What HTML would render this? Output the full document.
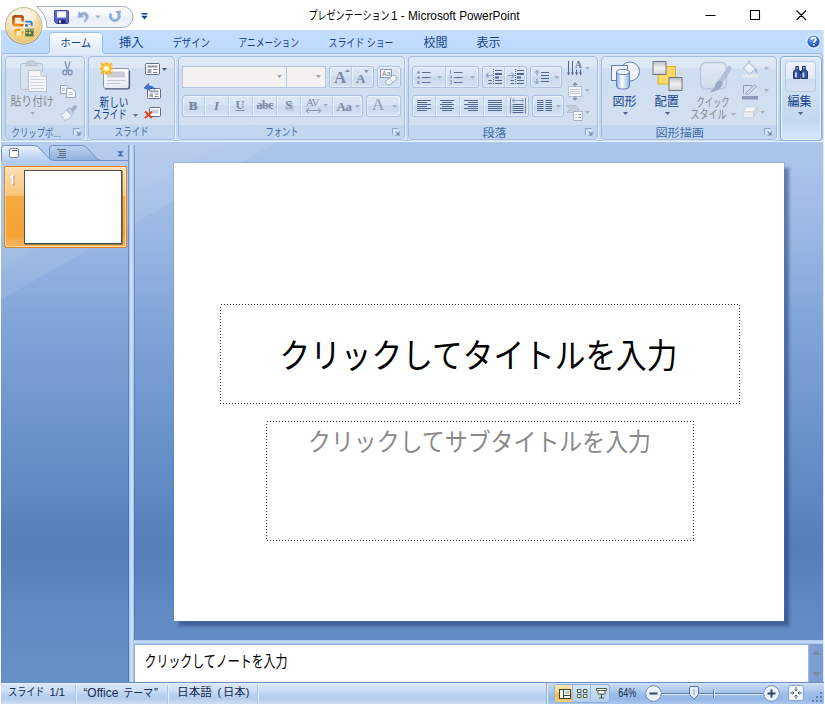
<!DOCTYPE html>
<html lang="ja"><head><meta charset="utf-8"><title>プレゼンテーション1 - Microsoft PowerPoint</title><style>
html,body{margin:0;padding:0}
body{width:825px;height:705px;position:relative;overflow:hidden;background:#fff;font-family:"Liberation Sans",sans-serif;font-size:12px}
.a{position:absolute;display:block;box-sizing:border-box}
svg{overflow:visible}
.t svg{position:absolute;left:0;top:0}
.t text{font-family:"Liberation Sans","Noto Sans CJK JP",sans-serif;white-space:pre}
.grp{border:1px solid #a3bde0;border-radius:4px;background:linear-gradient(#dfe9f6 0,#dce7f5 11px,#cfdef0 12px,#d2e0f1 100%);box-shadow:1px 0 0 rgba(255,255,255,.7),0 1px 0 rgba(255,255,255,.5)}
.grp i{position:absolute;left:0;right:0;bottom:0;height:14px;background:#c2d7ef;border-radius:0 0 3px 3px}
.bg{border:1px solid #a9c1e2;border-radius:3px;background:linear-gradient(#dde8f6 0,#d6e3f3 45%,#c9daee 50%,#d3e1f2 100%);box-shadow:inset 0 0 0 1px rgba(255,255,255,.45)}
.sep{width:1px;background:#bccfe8;box-shadow:1px 0 0 rgba(255,255,255,.45)}
</style></head><body>
<div class="a" style="left:0px;top:0px;width:825px;height:30px;background:#fff"></div>
<div class="a t" style="left:306px;top:7px;width:216px;height:16px"><svg width="216" height="16" role="img" aria-label="プレゼンテーション1 - Microsoft PowerPoint"><text x="2.5" y="13" font-size="12" fill="#000" textLength="81" lengthAdjust="spacingAndGlyphs">プレゼンテーション</text><text x="85" y="13.4" font-size="12.5" fill="#000" textLength="128.5" lengthAdjust="spacingAndGlyphs">1 - Microsoft PowerPoint</text></svg></div>
<svg class="a" style="left:700px;top:5px" width="110" height="20" viewBox="0 0 110 20"><path d="M5.5 10.5H15.5M50.5 5.5H59.5V14.5H50.5ZM96.5 5.5L106 15M106 5.5L96.5 15" fill="none" stroke="#000" stroke-width="1.1"/></svg>
<div class="a" style="left:0px;top:30px;width:825px;height:24px;background:linear-gradient(#c6ddfb,#bfdbff 60%,#bcd8fb)"></div>
<div class="a" style="left:0px;top:53px;width:825px;height:90px;background:linear-gradient(#dbe7f6 0,#d2e1f3 4px,#c5d9f1 30px,#c1d6ef 80px,#c9ddf5 86px,#dbe9fb 88px,#c7dcf6 90px)"></div>
<div class="a" style="left:1px;top:53px;width:822px;height:88px;border:1px solid #9cbce6;border-radius:4px;border-bottom-color:#a9c4e8"></div>
<svg class="a" style="left:46px;top:31px" width="62" height="24" viewBox="0 0 62 24"><defs><linearGradient id="tg" x1="0" y1="0" x2="0" y2="1"><stop offset="0" stop-color="#fdfeff"/><stop offset=".5" stop-color="#eaf2fc"/><stop offset="1" stop-color="#dbe7f6"/></linearGradient></defs><path d="M0.5 22.5Q3.5 22.5 3.5 19.5V4.5Q3.5 1.5 6.5 1.5H53.5Q56.5 1.5 56.5 4.5V19.5Q56.5 22.5 59.5 22.5V24H0.5Z" fill="url(#tg)"/><path d="M0.5 22.5Q3.5 22.5 3.5 19.5V4.5Q3.5 1.5 6.5 1.5H53.5Q56.5 1.5 56.5 4.5V19.5Q56.5 22.5 59.5 22.5" fill="none" stroke="#9dbde8"/></svg>
<div class="a t" style="left:59px;top:35px;width:34px;height:15px"><svg width="34" height="15" role="img" aria-label="ホーム"><text x="1.5" y="11.8" font-size="11" fill="#15428b" textLength="30.5" lengthAdjust="spacingAndGlyphs">ホーム</text></svg></div>
<div class="a t" style="left:117px;top:35px;width:28px;height:16px"><svg width="28" height="16" role="img" aria-label="挿入"><text x="2" y="12.4" font-size="12" fill="#15428b" textLength="24.5" lengthAdjust="spacingAndGlyphs">挿入</text></svg></div>
<div class="a t" style="left:171px;top:35px;width:41px;height:16px"><svg width="41" height="16" role="img" aria-label="デザイン"><text x="1.5" y="12.1" font-size="11.5" fill="#15428b" textLength="37.5" lengthAdjust="spacingAndGlyphs">デザイン</text></svg></div>
<div class="a t" style="left:237px;top:35px;width:64px;height:16px"><svg width="64" height="16" role="img" aria-label="アニメーション"><text x="1.5" y="12.1" font-size="11.5" fill="#15428b" textLength="60.5" lengthAdjust="spacingAndGlyphs">アニメーション</text></svg></div>
<div class="a t" style="left:327px;top:35px;width:68px;height:16px"><svg width="68" height="16" role="img" aria-label="スライド ショー"><text x="1.5" y="12.1" font-size="11.5" fill="#15428b" textLength="65" lengthAdjust="spacingAndGlyphs">スライド ショー</text></svg></div>
<div class="a t" style="left:422px;top:35px;width:27px;height:16px"><svg width="27" height="16" role="img" aria-label="校閲"><text x="1.5" y="12.4" font-size="12" fill="#15428b" textLength="24" lengthAdjust="spacingAndGlyphs">校閲</text></svg></div>
<div class="a t" style="left:475px;top:35px;width:27px;height:16px"><svg width="27" height="16" role="img" aria-label="表示"><text x="1.5" y="12.4" font-size="12" fill="#15428b" textLength="24" lengthAdjust="spacingAndGlyphs">表示</text></svg></div>
<svg class="a" style="left:805.5px;top:33.5px" width="15" height="15" viewBox="0 0 15 15"><defs><radialGradient id="hg" cx=".4" cy=".3" r=".8"><stop offset="0" stop-color="#7fb0ee"/><stop offset=".6" stop-color="#2a62c4"/><stop offset="1" stop-color="#1a3f9c"/></radialGradient></defs><circle cx="7.5" cy="7.5" r="6.7" fill="url(#hg)" stroke="#e9f1fc" stroke-width="1.2"/><path d="M5.3 5.7Q5.4 3.6 7.6 3.6Q9.8 3.7 9.8 5.6Q9.8 6.8 8.6 7.5Q7.8 8 7.8 9" fill="none" stroke="#fff" stroke-width="1.6"/><rect x="7" y="10" width="1.6" height="1.6" fill="#fff"/></svg>
<svg class="a" style="left:30px;top:4px" width="108" height="26" viewBox="0 0 108 26"><defs><linearGradient id="qg" x1="0" y1="0" x2="0" y2="1"><stop offset="0" stop-color="#fdfdfe"/><stop offset=".45" stop-color="#f3f6fb"/><stop offset=".5" stop-color="#e9eff7"/><stop offset="1" stop-color="#f0f4fa"/></linearGradient></defs><path d="M6.500 2.500H92.500A10.500 10.500 0 0 1 92.500 23.500H17Q17 10.500 6.500 2.500Z" fill="url(#qg)" stroke="#a6afbf"/></svg>
<svg class="a" style="left:54px;top:10px" width="15" height="14" viewBox="0 0 15 14"><path d="M1 .5H13.5Q14.5 .5 14.5 1.5V12.5Q14.5 13.5 13.5 13.5H2.5L.5 11.5V1Q.5 .5 1 .5Z" fill="#5f65cc" stroke="#4348ac"/><rect x="3" y="1" width="9" height="6.5" fill="#fff"/><rect x="3" y="1" width="9" height="1.2" fill="#c5c9ee"/><rect x="4" y="9.5" width="7.5" height="4" fill="#23265f"/><rect x="5" y="10.3" width="2" height="2.6" fill="#e8e8f4"/></svg>
<svg class="a" style="left:77px;top:11px" width="13" height="12" viewBox="0 0 13 12"><path d="M2 .6L.8 6.600L6.600 6L4.800 4.500Q7 3.200 8.400 5Q9.600 7.200 6.800 10.200L8 11Q12.600 7 10.800 3.300Q8.300 0 3.600 2.300Z" fill="#95add4" stroke="#8aa2cb" stroke-width=".4"/></svg>
<svg class="a" style="left:95px;top:15px" width="6" height="4" viewBox="0 0 6 4"><path d="M.3 .5H5.7L3 3.5Z" fill="#a3afc2"/></svg>
<svg class="a" style="left:108px;top:10px" width="14" height="14" viewBox="0 0 14 14"><path d="M3.300 3.600A4.300 4.300 0 1 0 10.600 4.200" fill="none" stroke="#93abd4" stroke-width="2.700"/><path d="M7.300 1.200L13 .6L12 6.600Z" fill="#93abd4"/></svg>
<svg class="a" style="left:141px;top:12px" width="7" height="8" viewBox="0 0 7 8"><path d="M.5 1H6.500V2.500H.5ZM.3 3.800H6.700L3.500 7.600Z" fill="#1b3f86"/></svg>
<svg class="a" style="left:3px;top:4px" width="44" height="44" viewBox="0 0 44 44"><defs><radialGradient id="ob" cx=".42" cy=".25" r=".85"><stop offset="0" stop-color="#fffdf4"/><stop offset=".4" stop-color="#f4e9cb"/><stop offset=".72" stop-color="#ecd089"/><stop offset="1" stop-color="#e9b84e"/></radialGradient><linearGradient id="or" x1="0" y1="0" x2="0" y2="1"><stop offset="0" stop-color="#c4b88f"/><stop offset="1" stop-color="#a08c55"/></linearGradient><linearGradient id="l1" x1="0" y1="0" x2="0" y2="1"><stop offset="0" stop-color="#b04a12"/><stop offset="1" stop-color="#f58f25"/></linearGradient><linearGradient id="l3" x1="0" y1="0" x2="0" y2="1"><stop offset="0" stop-color="#f3a21a"/><stop offset="1" stop-color="#fbd568"/></linearGradient></defs><circle cx="20.700" cy="21.700" r="18.700" fill="url(#or)"/><circle cx="20.700" cy="21.700" r="17.500" fill="url(#ob)" stroke="#f3ecd6" stroke-width=".8"/><ellipse cx="20.700" cy="12.500" rx="12.500" ry="7" fill="#fff" opacity=".3"/><rect x="10.400" y="12.300" width="9.300" height="8.800" rx="1.600" fill="#f8eed6" stroke="url(#l1)" stroke-width="2.800"/><path d="M17.300 17.500H21.500V20H17.300Z" fill="#f4e6c4"/><circle cx="18.700" cy="21.300" r="1.300" fill="#e5601c"/><path d="M22.300 17.600H27Q28.700 17.600 28.700 19.300V21.800" fill="none" stroke="#2c78d6" stroke-width="1.900"/><circle cx="23.500" cy="21.400" r="1.400" fill="#2c6fd0"/><circle cx="26.300" cy="20.300" r=".8" fill="#5a9ae6"/><rect x="12.400" y="25.900" width="7" height="6.800" rx="1.200" fill="#fbf0c8" stroke="url(#l3)" stroke-width="2.300"/><path d="M17.500 24.500H21V27H17.500Z" fill="#f3e2b0"/><path d="M22.200 24.600H30.600V32.400H22.200Z" fill="#55753f"/><path d="M23 25.300H24.500V26.800H23ZM25.800 25.300H27.300V26.800H25.800ZM23 28H24.500V29.500H23ZM28.300 25.300H29.800V26.600H28.300Z" fill="#e6dc82"/><circle cx="26.800" cy="29" r="1.300" fill="#d9d070"/></svg>
<div class="a grp" style="left:5px;top:56px;width:80px;height:84px;"><i></i></div>
<div class="a grp" style="left:88px;top:56px;width:87px;height:84px;"><i></i></div>
<div class="a grp" style="left:178px;top:56px;width:227px;height:84px;"><i></i></div>
<div class="a grp" style="left:408px;top:56px;width:190px;height:84px;"><i></i></div>
<div class="a grp" style="left:601px;top:56px;width:176px;height:84px;"><i></i></div>
<svg class="a" style="left:19px;top:60px" width="29" height="32" viewBox="0 0 29 32"><rect x="1.5" y="3.5" width="22" height="26" rx="2" fill="#d9e2ee" stroke="#b3bfd0"/><path d="M8 3.5Q8 1 12.5 .8Q17 1 17 3.5L18.5 5.5H6.5Z" fill="#c9d2df" stroke="#a9b5c7" stroke-width=".8"/><path d="M9.5 10.5H22L27.5 16V31.5H9.5Z" fill="#f4f6f9" stroke="#b6c1d1"/><path d="M22 10.5V16H27.5" fill="#e3e8ef" stroke="#b6c1d1"/><path d="M12 16.5H20M12 19.500H25M12 22.5H25M12 25.5H25M12 28.5H25" stroke="#ccd4df"/></svg>
<div class="a t" style="left:9px;top:94px;width:47px;height:16px"><svg width="47" height="16" role="img" aria-label="貼り付け"><text x="1.500" y="12.200" font-size="12" fill="#85888e" textLength="43.500" lengthAdjust="spacingAndGlyphs">貼り付け</text></svg></div>
<svg class="a" style="left:30px;top:112px" width="5" height="3" viewBox="0 0 5 3"><path d="M0 0H5L2.5 3Z" fill="#a9adb5"/></svg>
<svg class="a" style="left:62px;top:61px" width="11" height="15" viewBox="0 0 11 15"><path d="M3 .5Q3.500 5 6.500 9.500M8 .5Q7.500 5 4.500 9.500" stroke="#8c9dbc" stroke-width="1.600" fill="none"/><ellipse cx="2.800" cy="11.500" rx="2" ry="2.300" fill="none" stroke="#8194b6" stroke-width="1.400"/><ellipse cx="8.200" cy="11.500" rx="2" ry="2.300" fill="none" stroke="#8194b6" stroke-width="1.400"/></svg>
<svg class="a" style="left:60px;top:85px" width="16" height="13" viewBox="0 0 16 13"><path d="M.5 .5H6L8.500 3V8.500H.5Z" fill="#f2f5f9" stroke="#97a3b8"/><path d="M6.500 3.500H12L15.5 7V12.500H6.500Z" fill="#f6f8fb" stroke="#97a3b8"/><path d="M8.500 7.500H13M8.500 9.500H13M2 3.5H5M2 5.5H5" stroke="#b7c1d1"/></svg>
<svg class="a" style="left:60px;top:105px" width="17" height="16" viewBox="0 0 17 16"><path d="M10.500 4.500L14.300 .6Q15.500 .2 16.200 1.200Q16.800 2.300 16 3.200L12.500 7Z" fill="#9fb0cc" stroke="#8a9cbc" stroke-width=".6"/><path d="M7 4.500L9.500 2.500L14 8L11.500 10.500Z" fill="#c9d3e3" stroke="#9aa9c3" stroke-width=".7"/><path d="M.8 9.500Q4.500 8.500 6.800 5L11.500 10.800Q9 15.300 4.800 15.300Q2 13.500 .8 9.500Z" fill="#f3f5f9" stroke="#a3b0c6" stroke-width=".8"/><path d="M3 11.500Q5 13 6 14.500M5 9.500Q7.500 11.500 8.500 13" stroke="#cfd7e4" stroke-width=".7" fill="none"/></svg>
<div class="a t" style="left:10px;top:125px;width:52px;height:15px"><svg width="52" height="15" role="img" aria-label="クリップボ..."><text x="1.500" y="11.500" font-size="11" fill="#3e6aaa" textLength="49" lengthAdjust="spacingAndGlyphs">クリップボ...</text></svg></div>
<svg class="a" style="left:73px;top:128px" width="8" height="8" viewBox="0 0 8 8"><path d="M.5 6.500V.5H6.500" fill="none" stroke="#8ea6cb"/><path d="M1.500 1.500H6.500V6.500H1.500Z" fill="#fff" opacity=".55"/><path d="M3.500 3.500L6.500 6.500M7 3.500V7H3.500" fill="none" stroke="#6f87b0" stroke-width="1.100"/></svg>
<svg class="a" style="left:98px;top:61px" width="34" height="30" viewBox="0 0 34 30"><defs><linearGradient id="ns" x1="0" y1="0" x2="0" y2="1"><stop offset="0" stop-color="#fff"/><stop offset="1" stop-color="#e6ebf2"/></linearGradient></defs><rect x="5.500" y="7.500" width="25.500" height="20" rx="2" fill="url(#ns)" stroke="#8793a8" stroke-width="1"/><path d="M7 28H30Q31.500 28 31.500 26V10" fill="none" stroke="#4f5d78" stroke-width="1.200"/><rect x="9" y="10.500" width="18" height="6" fill="#c9ced6"/><path d="M9 19.500H27M9 22.500H22" stroke="#c3c9d3"/><g transform="translate(2.500,1.500)"><path d="M0 0H12V12H0Z" fill="#fbc23c" opacity=".55"/><path d="M6 -.5L7.300 3.200L11 1L8.800 4.700L12.500 6L8.800 7.300L11 11L7.300 8.800L6 12.500L4.700 8.800L1 11L3.200 7.300L-.5 6L3.200 4.700L1 1L4.700 3.200Z" fill="#f9b521" stroke="#f7a516" stroke-width=".6"/><circle cx="6" cy="6" r="3.200" fill="#ffe680"/><circle cx="6" cy="6" r="1.700" fill="#fffbe6"/></g></svg>
<div class="a t" style="left:98px;top:95px;width:32px;height:16px"><svg width="32" height="16" role="img" aria-label="新しい"><text x="1.500" y="12.200" font-size="12" fill="#15428b" textLength="29" lengthAdjust="spacingAndGlyphs">新しい</text></svg></div>
<div class="a t" style="left:91px;top:106px;width:37px;height:16px"><svg width="37" height="16" role="img" aria-label="スライド"><text x="2.100" y="12.700" font-size="12" fill="#15428b" textLength="33.500" lengthAdjust="spacingAndGlyphs">スライド</text></svg></div>
<svg class="a" style="left:133px;top:114px" width="5" height="3" viewBox="0 0 5 3"><path d="M0 0H5L2.5 3Z" fill="#5a6e95"/></svg>
<svg class="a" style="left:145px;top:63px" width="15" height="12" viewBox="0 0 15 12"><rect x=".5" y=".5" width="14" height="11" rx="1" fill="#fff" stroke="#5f6d85"/><rect x="2.500" y="2.500" width="10" height="2" fill="#8c98ad"/><rect x="2.500" y="6" width="4" height="4" fill="#9aa5b8"/><path d="M8 6.500H12.500M8 9.500H12.500" stroke="#7e8aa0"/></svg>
<svg class="a" style="left:162px;top:68px" width="5" height="3" viewBox="0 0 5 3"><path d="M0 0H5L2.5 3Z" fill="#4a5e85"/></svg>
<svg class="a" style="left:144px;top:83px" width="17" height="16" viewBox="0 0 17 16"><rect x="3.500" y="5.500" width="13" height="10" rx="1" fill="#fff" stroke="#5f6d85"/><rect x="5.500" y="7.500" width="9" height="1.800" fill="#8c98ad"/><rect x="5.500" y="10.500" width="3.500" height="3.500" fill="#9aa5b8"/><path d="M10.500 11H14.500M10.500 13.500H14.500" stroke="#7e8aa0"/><path d="M0 5L4.500 .3L5 3Q9.500 2.500 11 6.500Q8.500 4.800 5.300 5.300L5.800 7.600Z" fill="#3f78d0" stroke="#2455a6" stroke-width=".5"/></svg>
<svg class="a" style="left:144px;top:107px" width="17" height="12" viewBox="0 0 17 12"><rect x="5.500" y=".5" width="11" height="9" rx="1" fill="#fff" stroke="#5f6d85"/><rect x="7.500" y="2.500" width="7" height="4" fill="#c7ced9"/><path d="M1 4.500L8 11M8 4.500L1 11" stroke="#e2431e" stroke-width="2"/></svg>
<div class="a t" style="left:113px;top:125px;width:37px;height:15px"><svg width="37" height="15" role="img" aria-label="スライド"><text x="1.500" y="11.400" font-size="11" fill="#3e6aaa" textLength="34" lengthAdjust="spacingAndGlyphs">スライド</text></svg></div>
<div class="a" style="left:182px;top:66px;width:144px;height:22px;background:#f3f2f0;border:1px solid #b3c6e1"></div>
<div class="a" style="left:286px;top:67px;width:1px;height:20px;background:#b3c6e1"></div>
<svg class="a" style="left:277px;top:75px" width="5" height="3" viewBox="0 0 5 3"><path d="M0 0H5L2.5 3Z" fill="#9da3ad"/></svg>
<svg class="a" style="left:316px;top:75px" width="5" height="3" viewBox="0 0 5 3"><path d="M0 0H5L2.5 3Z" fill="#9da3ad"/></svg>
<div class="a bg" style="left:329px;top:66px;width:45px;height:22px"></div>
<div class="a sep" style="left:351px;top:67px;height:20px"></div>
<div class="a bg" style="left:377px;top:66px;width:24px;height:22px"></div>
<div class="a bg" style="left:182px;top:95px;width:181px;height:22px"></div>
<div class="a sep" style="left:204px;top:96px;height:20px"></div>
<div class="a sep" style="left:228px;top:96px;height:20px"></div>
<div class="a sep" style="left:252px;top:96px;height:20px"></div>
<div class="a sep" style="left:276px;top:96px;height:20px"></div>
<div class="a sep" style="left:300px;top:96px;height:20px"></div>
<div class="a sep" style="left:332px;top:96px;height:20px"></div>
<div class="a bg" style="left:366px;top:95px;width:35px;height:22px"></div>
<div class="a" style="left:334px;top:69px;font-family:'Liberation Serif',serif;font-size:17px;line-height:1;color:#7d8aa3;white-space:nowrap;font-weight:bold">A</div>
<svg class="a" style="left:345px;top:69px" width="5" height="3" viewBox="0 0 5 3"><path d="M0 3L2.500 0L5 3Z" fill="#8a96ad"/></svg>
<div class="a" style="left:356px;top:72px;font-family:'Liberation Serif',serif;font-size:13px;line-height:1;color:#7d8aa3;white-space:nowrap;font-weight:bold">A</div>
<svg class="a" style="left:364px;top:70px" width="5" height="3" viewBox="0 0 5 3"><path d="M0 0H5L2.500 3Z" fill="#8a96ad"/></svg>
<svg class="a" style="left:380px;top:69px" width="18" height="17" viewBox="0 0 18 17"><rect x=".5" y=".5" width="11" height="8" fill="#fff" stroke="#8c99b0"/><text x="2" y="7.300" font-family="Liberation Sans" font-size="7" fill="#6d7b96">Aa</text><path d="M6 12L12.500 6.500Q14.500 5.800 16 7.500Q17.300 9.300 16 10.800L10 15.800Q7.500 16.300 6.300 14.800Q5.200 13.300 6 12Z" fill="#f3f5f9" stroke="#8e9ab0" stroke-width=".8"/><path d="M9.300 9.300L13 13.500" stroke="#a9b3c5" stroke-width=".8"/></svg>
<div class="a" style="left:188.5px;top:98.5px;font-family:'Liberation Serif',serif;font-size:13px;line-height:1;color:#7d8aa3;white-space:nowrap;font-weight:bold;text-shadow:.5px 0 0 #7d8aa3">B</div>
<div class="a" style="left:214px;top:98.5px;font-family:'Liberation Serif',serif;font-size:13px;line-height:1;color:#7d8aa3;white-space:nowrap;font-style:italic;font-weight:bold">I</div>
<div class="a" style="left:235.5px;top:98.5px;font-family:'Liberation Serif',serif;font-size:12.5px;line-height:1;color:#7d8aa3;white-space:nowrap;font-weight:bold;text-decoration:underline">U</div>
<div class="a" style="left:256.5px;top:98.5px;font-family:'Liberation Serif',serif;font-size:12px;line-height:1;color:#7d8aa3;white-space:nowrap;font-weight:bold;text-decoration:line-through;letter-spacing:-.5px">abc</div>
<div class="a" style="left:285px;top:97.5px;font-family:'Liberation Serif',serif;font-size:13.5px;line-height:1;color:#7d8aa3;white-space:nowrap;font-weight:bold;text-shadow:1.500px 1.500px 1px #aab4c6">S</div>
<div class="a" style="left:306px;top:97px;font-family:'Liberation Serif',serif;font-size:11px;line-height:1;color:#7d8aa3;white-space:nowrap;letter-spacing:-1px">AV</div>
<svg class="a" style="left:306px;top:108px" width="15" height="5" viewBox="0 0 15 5"><path d="M0 2.500H15M3 0L0 2.500L3 5M12 0L15 2.500L12 5" fill="none" stroke="#8b97ae"/></svg>
<svg class="a" style="left:323px;top:104px" width="5" height="3" viewBox="0 0 5 3"><path d="M0 0H5L2.5 3Z" fill="#a9b0bd"/></svg>
<div class="a" style="left:336.5px;top:100px;font-family:'Liberation Serif',serif;font-size:13px;line-height:1;color:#7d8aa3;white-space:nowrap;letter-spacing:-.3px;font-weight:bold">Aa</div>
<svg class="a" style="left:355px;top:105px" width="5" height="3" viewBox="0 0 5 3"><path d="M0 0H5L2.5 3Z" fill="#a9b0bd"/></svg>
<div class="a" style="left:372px;top:96px;font-family:'Liberation Serif',serif;font-size:17px;line-height:1;color:#8f9ab0;white-space:nowrap;">A</div>
<svg class="a" style="left:392px;top:105px" width="5" height="3" viewBox="0 0 5 3"><path d="M0 0H5L2.5 3Z" fill="#a9b0bd"/></svg>
<div class="a t" style="left:264px;top:125px;width:36px;height:15px"><svg width="36" height="15" role="img" aria-label="フォント"><text x="1.500" y="11.400" font-size="11" fill="#3e6aaa" textLength="33" lengthAdjust="spacingAndGlyphs">フォント</text></svg></div>
<svg class="a" style="left:392px;top:128px" width="8" height="8" viewBox="0 0 8 8"><path d="M.5 6.500V.5H6.500" fill="none" stroke="#8ea6cb"/><path d="M1.500 1.500H6.500V6.500H1.500Z" fill="#fff" opacity=".55"/><path d="M3.500 3.500L6.500 6.500M7 3.500V7H3.500" fill="none" stroke="#6f87b0" stroke-width="1.100"/></svg>
<div class="a bg" style="left:412px;top:66px;width:67px;height:22px"></div>
<div class="a sep" style="left:445px;top:67px;height:20px"></div>
<div class="a bg" style="left:482px;top:66px;width:45px;height:22px"></div>
<div class="a sep" style="left:504px;top:67px;height:20px"></div>
<div class="a bg" style="left:530px;top:66px;width:32px;height:22px"></div>
<div class="a bg" style="left:412px;top:95px;width:117px;height:22px"></div>
<div class="a sep" style="left:435px;top:96px;height:20px"></div>
<div class="a sep" style="left:459px;top:96px;height:20px"></div>
<div class="a sep" style="left:483px;top:96px;height:20px"></div>
<div class="a sep" style="left:506px;top:96px;height:20px"></div>
<div class="a bg" style="left:532px;top:95px;width:32px;height:22px"></div>
<svg class="a" style="left:417px;top:70px" width="16" height="14" viewBox="0 0 16 14"><path d="M5 2.500H13.500M5 7.500H13.500M5 12.500H13.500" stroke="#60708f" stroke-width="1.2"/><circle cx="1.500" cy="2.500" r="1.300" fill="#7f8eab"/><circle cx="1.500" cy="7.500" r="1.300" fill="#7f8eab"/><circle cx="1.500" cy="12.500" r="1.300" fill="#7f8eab"/></svg>
<svg class="a" style="left:437px;top:76px" width="5" height="3" viewBox="0 0 5 3"><path d="M0 0H5L2.5 3Z" fill="#a9b0bd"/></svg>
<svg class="a" style="left:449px;top:70px" width="16" height="14" viewBox="0 0 16 14"><path d="M5 2.500H13.500M5 7.500H13.500M5 12.500H13.500" stroke="#60708f" stroke-width="1.2"/><path d="M1.500 0V4M.5 6H2.500V8H.5M.5 10.500H2.500V14H.5" stroke="#8e9ab1" stroke-width=".9" fill="none"/></svg>
<svg class="a" style="left:470px;top:76px" width="5" height="3" viewBox="0 0 5 3"><path d="M0 0H5L2.5 3Z" fill="#a9b0bd"/></svg>
<svg class="a" style="left:485px;top:69px" width="18" height="16" viewBox="0 0 18 16"><path d="M8.500 0V16" stroke="#5f6f8f" stroke-dasharray="1 1"/><path d="M10 1.500H17M10 11.500H17M10 14.500H17M3.500 11.500H7M3.500 14.500H7" stroke="#53668c"/><path d="M10 5H17M10 8.500H14" stroke="#53668c" stroke-width="2"/><path d="M1 6.500H7.500M3.500 4L1 6.500L3.500 9" fill="none" stroke="#8da3c9" stroke-width="1.100"/></svg>
<svg class="a" style="left:507px;top:69px" width="18" height="16" viewBox="0 0 18 16"><path d="M8.500 0V16" stroke="#5f6f8f" stroke-dasharray="1 1"/><path d="M10 1.500H17M10 11.500H17M10 14.500H17M3.500 11.500H7M3.500 14.500H7" stroke="#53668c"/><path d="M10 5H17M10 8.500H14" stroke="#53668c" stroke-width="2"/><path d="M.5 6.500H7M4.500 4L7 6.500L4.500 9" fill="none" stroke="#8da3c9" stroke-width="1.100"/></svg>
<svg class="a" style="left:534px;top:69px" width="18" height="16" viewBox="0 0 18 16"><path d="M7 3.500H15M7 6.500H15M7 9.500H15M7 12.500H15" stroke="#53668c" stroke-width="1.100"/><path d="M3 1.500V6.500M.8 3.800L3 1.300L5.200 3.800M3 9.500V14.500M.8 12.200L3 14.700L5.200 12.200" fill="none" stroke="#7a93bd" stroke-width="1"/></svg>
<svg class="a" style="left:554px;top:76px" width="5" height="3" viewBox="0 0 5 3"><path d="M0 0H5L2.5 3Z" fill="#a9b0bd"/></svg>
<svg class="a" style="left:417px;top:99px" width="20" height="16" viewBox="0 0 20 16"><path d="M0 1.5H14M0 3.5H10M0 5.5H14M0 7.5H10M0 9.5H14M0 11.5H10" stroke="#53668c" stroke-width="1"/></svg>
<svg class="a" style="left:440px;top:99px" width="20" height="16" viewBox="0 0 20 16"><path d="M0 1.5H14M2 3.5H12M0 5.5H14M2 7.5H12M0 9.5H14M2 11.5H12" stroke="#53668c" stroke-width="1"/></svg>
<svg class="a" style="left:464px;top:99px" width="20" height="16" viewBox="0 0 20 16"><path d="M0 1.5H14M4 3.5H14M0 5.5H14M4 7.5H14M0 9.5H14M4 11.5H14" stroke="#53668c" stroke-width="1"/></svg>
<svg class="a" style="left:488px;top:99px" width="20" height="16" viewBox="0 0 20 16"><path d="M0 1.5H14M0 3.5H14M0 5.5H14M0 7.5H14M0 9.5H14M0 11.5H14" stroke="#53668c" stroke-width="1"/></svg>
<svg class="a" style="left:510px;top:97px" width="16" height="18" viewBox="0 0 16 18"><path d="M.5 .5V16.500M15.500 .5V16.500" stroke="#7f8da8"/><path d="M2 3.500H14M4.500 1.500L2 3.500L4.500 5.500M11.500 1.500L14 3.500L11.500 5.500" fill="none" stroke="#8da3c9"/><path d="M2.500 7.500H13.500M2.500 9.500H13.500M2.500 11.500H13.500M2.500 13.500H13.500M2.500 15.500H13.500" stroke="#53668c"/></svg>
<svg class="a" style="left:537px;top:99px" width="16" height="15" viewBox="0 0 16 15"><path d="M0 1.5H6.500M8.500 1.5H15M0 3.5H6.500M8.500 3.5H15M0 5.5H6.500M8.500 5.5H15M0 7.5H6.500M8.500 7.500H15M0 9.5H6.500M8.500 9.5H15M0 11.5H6.500M8.500 11.5H15" stroke="#53668c" stroke-width="1"/></svg>
<svg class="a" style="left:556px;top:105px" width="5" height="3" viewBox="0 0 5 3"><path d="M0 0H5L2.5 3Z" fill="#a9b0bd"/></svg>
<svg class="a" style="left:567px;top:61px" width="16" height="16" viewBox="0 0 16 16"><path d="M1.500 0V13M5.500 0V13M9.500 8.500V13M13.500 8.500V13" stroke="#53668c"/><path d="M0 11.500L1.500 14.500L3 11.500ZM4 11.500L5.500 14.500L7 11.500ZM8 11.500L9.500 14.500L11 11.500ZM12 11.500L13.500 14.500L15 11.500Z" fill="#53668c"/><text x="8" y="7.300" font-family="Liberation Serif" font-weight="bold" font-size="9.500" fill="#6b7a99">A</text></svg>
<svg class="a" style="left:585px;top:67px" width="5" height="3" viewBox="0 0 5 3"><path d="M0 0H5L2.5 3Z" fill="#a9b0bd"/></svg>
<svg class="a" style="left:567px;top:83px" width="17" height="17" viewBox="0 0 17 17"><rect x="1.500" y="3.500" width="13" height="10" fill="#f4f6f9" stroke="#b7c1d1"/><path d="M3.500 6.500H12.500M3.500 8.500H12.500M3.500 10.500H12.500" stroke="#8e9bb3" stroke-dasharray="1 1"/><path d="M8 0V4M6 2L8 0L10 2M8 17V13M6 15L8 17L10 15" fill="none" stroke="#7f8ea9" stroke-width="1.100"/></svg>
<svg class="a" style="left:585px;top:89px" width="5" height="3" viewBox="0 0 5 3"><path d="M0 0H5L2.5 3Z" fill="#a9b0bd"/></svg>
<svg class="a" style="left:567px;top:105px" width="17" height="16" viewBox="0 0 17 16"><path d="M0 .5H9L12 4L9 7.500H0L3 4Z" fill="#c3ccda" stroke="#a9b4c6" stroke-width=".7"/><rect x="6.500" y="6.500" width="9" height="9" fill="#f4f6f9" stroke="#a9b4c6"/><path d="M8.500 9.500H9.500M11 9.500H14M8.500 12.500H9.500M11 12.500H14" stroke="#8e9bb3"/></svg>
<svg class="a" style="left:585px;top:111px" width="5" height="3" viewBox="0 0 5 3"><path d="M0 0H5L2.5 3Z" fill="#a9b0bd"/></svg>
<div class="a t" style="left:481px;top:125px;width:27px;height:15px"><svg width="27" height="15" role="img" aria-label="段落"><text x="1.500" y="11.500" font-size="11" fill="#3e6aaa" textLength="24" lengthAdjust="spacingAndGlyphs">段落</text></svg></div>
<svg class="a" style="left:585px;top:128px" width="8" height="8" viewBox="0 0 8 8"><path d="M.5 6.500V.5H6.500" fill="none" stroke="#8ea6cb"/><path d="M1.500 1.500H6.500V6.500H1.500Z" fill="#fff" opacity=".55"/><path d="M3.500 3.500L6.500 6.500M7 3.500V7H3.500" fill="none" stroke="#6f87b0" stroke-width="1.100"/></svg>
<svg class="a" style="left:610px;top:61px" width="31" height="30" viewBox="0 0 31 30"><defs><linearGradient id="cy" x1="0" y1="0" x2="1" y2="0"><stop offset="0" stop-color="#7ea8e2"/><stop offset=".42" stop-color="#fff"/><stop offset="1" stop-color="#8fb4e8"/></linearGradient></defs><circle cx="20" cy="10.500" r="9.500" fill="#eef4fc" stroke="#5f7fb3"/><rect x="1.500" y="4.500" width="16" height="15" fill="#f2f6fc" stroke="#5f7fb3"/><path d="M6.500 11V25Q6.500 28 13 28Q19.500 28 19.500 25V11Z" fill="url(#cy)" stroke="#5f7fb3"/><ellipse cx="13" cy="11" rx="6.500" ry="2.600" fill="#f4f8fd" stroke="#5f7fb3"/></svg>
<div class="a t" style="left:611px;top:94px;width:27px;height:16px"><svg width="27" height="16" role="img" aria-label="図形"><text x="1.500" y="12.200" font-size="12" fill="#15428b" textLength="24" lengthAdjust="spacingAndGlyphs">図形</text></svg></div>
<svg class="a" style="left:623px;top:112px" width="5" height="3" viewBox="0 0 5 3"><path d="M0 0H5L2.5 3Z" fill="#4a5e85"/></svg>
<svg class="a" style="left:653px;top:60px" width="30" height="32" viewBox="0 0 30 32"><defs><linearGradient id="gs" x1="0" y1="0" x2="0" y2="1"><stop offset="0" stop-color="#b9bdc3"/><stop offset=".5" stop-color="#f3f3f3"/><stop offset="1" stop-color="#d0d0d0"/></linearGradient></defs><rect x="5" y="6.500" width="17.500" height="17.500" fill="#fbd968" stroke="#e0ad2a"/><rect x="0" y="1.500" width="13" height="13" fill="url(#gs)" stroke="#6f7784"/><rect x="16" y="17.500" width="13" height="13" fill="url(#gs)" stroke="#6f7784"/></svg>
<div class="a t" style="left:653px;top:94px;width:28px;height:16px"><svg width="28" height="16" role="img" aria-label="配置"><text x="1.500" y="12.200" font-size="12" fill="#15428b" textLength="24.500" lengthAdjust="spacingAndGlyphs">配置</text></svg></div>
<svg class="a" style="left:665px;top:112px" width="5" height="3" viewBox="0 0 5 3"><path d="M0 0H5L2.5 3Z" fill="#4a5e85"/></svg>
<svg class="a" style="left:699px;top:61px" width="33" height="32" viewBox="0 0 33 32"><defs><linearGradient id="qs" x1="0" y1="0" x2="0" y2="1"><stop offset="0" stop-color="#e3eaf5"/><stop offset="1" stop-color="#cfdbeb"/></linearGradient></defs><rect x="1.500" y="1.500" width="26" height="26.500" rx="5.500" fill="url(#qs)" stroke="#b7c5db" stroke-width="1.300"/><path d="M29.300 5.500Q31 4.800 31.800 6.300Q32.300 7.500 31.500 8.800L23.500 21.500L20 19.500Z" fill="#b3bfd4" stroke="#a3b0c8" stroke-width=".5"/><path d="M20 19.500L23.500 21.500Q23.300 25.500 19.500 28Q16 30.500 11.500 31Q15.500 28 16.500 24.500Q17.500 21 20 19.500Z" fill="#9aa9c4" stroke="#8d9cb8" stroke-width=".5"/></svg>
<div class="a t" style="left:695px;top:95px;width:36px;height:16px"><svg width="36" height="16" role="img" aria-label="クイック"><text x="1.500" y="12.200" font-size="12" fill="#85888e" textLength="33" lengthAdjust="spacingAndGlyphs">クイック</text></svg></div>
<div class="a t" style="left:689px;top:106px;width:39px;height:16px"><svg width="39" height="16" role="img" aria-label="スタイル"><text x="1.500" y="12.800" font-size="12" fill="#85888e" textLength="36" lengthAdjust="spacingAndGlyphs">スタイル</text></svg></div>
<svg class="a" style="left:731px;top:113px" width="5" height="3" viewBox="0 0 5 3"><path d="M0 0H5L2.5 3Z" fill="#a9adb5"/></svg>
<svg class="a" style="left:742px;top:61px" width="17" height="17" viewBox="0 0 17 17"><path d="M7 1.500L13.500 8L7.500 13L1.500 7Z" fill="#eef1f6" stroke="#a9b3c5"/><path d="M7 1.500Q5 -1 8.500 .5" fill="none" stroke="#a9b3c5"/><path d="M13 6.500Q16 9 15 12.500Q13 11 13 6.500Z" fill="#9ab0d3"/><rect x="0" y="13.500" width="16" height="3" fill="#e6ebf2"/></svg>
<svg class="a" style="left:764px;top:67px" width="5" height="3" viewBox="0 0 5 3"><path d="M0 0H5L2.5 3Z" fill="#a9b0bd"/></svg>
<svg class="a" style="left:742px;top:84px" width="17" height="16" viewBox="0 0 17 16"><path d="M1.500 9.500V1.500H10" fill="none" stroke="#8c98af"/><path d="M3.500 9.500L12.500 .8L14.500 2.600L6 10.500Z" fill="#d3dae6" stroke="#8c98af" stroke-width=".8"/><rect x="0" y="12" width="16" height="3.500" fill="#8c9ab5"/></svg>
<svg class="a" style="left:764px;top:89px" width="5" height="3" viewBox="0 0 5 3"><path d="M0 0H5L2.5 3Z" fill="#a9b0bd"/></svg>
<svg class="a" style="left:742px;top:106px" width="18" height="13" viewBox="0 0 18 13"><path d="M1 6L5 1H15L11.500 6Z" fill="#f4f6f9" stroke="#c1c9d6" stroke-width=".7"/><path d="M1 6H11.500V11Q6 13 1 11Z" fill="#e9edf3" stroke="#c1c9d6" stroke-width=".7"/><path d="M11.500 6L15 1V6.500L11.500 11Z" fill="#d3dae5" stroke="#c1c9d6" stroke-width=".7"/></svg>
<svg class="a" style="left:760px;top:111px" width="5" height="3" viewBox="0 0 5 3"><path d="M0 0H5L2.5 3Z" fill="#a9b0bd"/></svg>
<div class="a t" style="left:654px;top:125px;width:52px;height:15px"><svg width="52" height="15" role="img" aria-label="図形描画"><text x="1.500" y="11.500" font-size="11" fill="#3e6aaa" textLength="48.500" lengthAdjust="spacingAndGlyphs">図形描画</text></svg></div>
<svg class="a" style="left:764px;top:128px" width="8" height="8" viewBox="0 0 8 8"><path d="M.5 6.500V.5H6.500" fill="none" stroke="#8ea6cb"/><path d="M1.500 1.500H6.500V6.500H1.500Z" fill="#fff" opacity=".55"/><path d="M3.500 3.500L6.500 6.500M7 3.500V7H3.500" fill="none" stroke="#6f87b0" stroke-width="1.100"/></svg>
<div class="a" style="left:780px;top:56px;width:42px;height:85px;border:1px solid #86abd9;border-radius:4px;background:linear-gradient(#dce8f7 0,#d1e0f3 40%,#c3d7ef 75%,#d5e6fa 100%);box-shadow:inset 0 0 0 1px rgba(255,255,255,.6)"></div>
<div class="a" style="left:785px;top:61px;width:31px;height:31px;border:1px solid #b7cbe6;border-radius:4px;background:linear-gradient(#eef4fb 0,#e2ecf8 55%,#cddcf0 60%,#d5e2f3 100%)"></div>
<svg class="a" style="left:793px;top:66px" width="15" height="13" viewBox="0 0 15 13"><path d="M2.800 .5H5.500V3.200L7 5.500V12.500H.5V5.500L2.800 3.200ZM9.500 .5H12.200V3.200L14.500 5.500V12.500H8V5.500L9.500 3.200Z" fill="#35539f" stroke="#18275e" stroke-width=".9"/><path d="M6.800 5H8.200V8H6.800Z" fill="#18275e"/><path d="M2 6.500H3.800V11.500H2ZM9.500 6.500H11.300V11.500H9.500ZM3.500 1.300H4.800V2.800H3.500ZM10.200 1.300H11.500V2.800H10.200Z" fill="#cdd9f2"/></svg>
<div class="a t" style="left:786px;top:94px;width:27px;height:16px"><svg width="27" height="16" role="img" aria-label="編集"><text x="1.500" y="12.200" font-size="12" fill="#15428b" textLength="24" lengthAdjust="spacingAndGlyphs">編集</text></svg></div>
<svg class="a" style="left:798px;top:112px" width="5" height="3" viewBox="0 0 5 3"><path d="M0 0H5L2.5 3Z" fill="#4a5e85"/></svg>
<div class="a" style="left:0px;top:142px;width:825px;height:541px;background:linear-gradient(#adc6eb 0,#a5c0e8 8%,#95b4e0 20%,#86a8da 30%,#7097cf 48%,#5e88c2 66%,#567fba 75%,#5f89c3 86%,#6890c8 100%)"></div>
<svg class="a" style="left:0px;top:142px" width="825" height="541" viewBox="0 0 825 541"><defs><linearGradient id="sw" x1="0" y1="1" x2="1" y2="0"><stop offset="0" stop-color="#fff" stop-opacity="0"/><stop offset=".5" stop-color="#fff" stop-opacity=".13"/><stop offset="1" stop-color="#fff" stop-opacity="0"/></linearGradient></defs><path d="M0 0H277L0 158Z" fill="#fff" opacity=".09"/><path d="M0 0H225L0 128Z" fill="#fff" opacity=".05"/></svg>
<div class="a" style="left:0px;top:141px;width:825px;height:1px;background:#e4f2fc"></div>
<div class="a" style="left:823px;top:30px;width:2px;height:653px;background:#dfeaf8"></div>
<div class="a" style="left:129px;top:145px;width:5px;height:538px;background:linear-gradient(90deg,#9fbde6,#cfe1f8 40%,#c3d9f5 80%,#8eaedb)"></div>
<div class="a" style="left:128px;top:145px;width:1px;height:538px;background:rgba(70,110,170,.55)"></div>
<div class="a" style="left:134px;top:145px;width:1px;height:495px;background:rgba(70,110,170,.45)"></div>
<svg class="a" style="left:0px;top:142px" width="130" height="21" viewBox="0 0 130 21"><defs><linearGradient id="pt" x1="0" y1="0" x2="0" y2="1"><stop offset="0" stop-color="#eaf2fc"/><stop offset="1" stop-color="#b5cdee"/></linearGradient><linearGradient id="pt2" x1="0" y1="0" x2="0" y2="1"><stop offset="0" stop-color="#bdd3f0"/><stop offset="1" stop-color="#8fb0de"/></linearGradient></defs><path d="M1 18.500H128.500" stroke="#6f93c9"/><path d="M49.500 18.500V6Q49.500 3.500 52.500 3.500H82Q86 3.500 89 8L97 16.500Q99 18.500 102 18.500Z" fill="url(#pt2)" stroke="#6f93c9"/><path d="M1.500 19V6Q1.500 3.500 4.500 3.500H34Q38 3.500 41 8L49 16.500Q51 18.500 54 18.500V19Z" fill="url(#pt)"/><path d="M1.500 19V6Q1.500 3.500 4.500 3.500H34Q38 3.500 41 8L49 16.500Q51 18.500 54 18.500" fill="none" stroke="#6f93c9"/><rect x="9.500" y="6.500" width="9" height="9" rx="1.500" fill="#fff" stroke="#7d8794"/><path d="M12 8.500H17" stroke="#555"/><path d="M57 7.500H66M59 9.500H66M59 11.500H66M59 13.500H66M57 15.500H66" stroke="#5f6f86"/><path d="M117.300 9.300H123.700L120.500 12.200ZM117.300 14.300H123.700L120.500 11.400Z" fill="#4068a8"/></svg>
<div class="a" style="left:4px;top:166px;width:123px;height:82px;border:1px solid #e47f25;border-radius:2px;background:linear-gradient(#fbe0b4 0,#f9c77f 35%,#f6a940 37%,#f5a136 85%,#f7b864 100%);box-shadow:inset 0 0 0 1px rgba(255,236,190,.7)"></div>
<div class="a" style="left:24px;top:170px;width:98px;height:74px;background:#fff;border:1px solid #4d4d4d;box-shadow:1px 1px 0 rgba(80,90,60,.6)"></div>
<svg class="a" style="left:9px;top:174px" width="8" height="12" viewBox="0 0 8 12"><path d="M1.400 4L3.500 2.200V10.400" fill="none" stroke="#b08f4c" stroke-width="2" transform="translate(.9,.9)"/><path d="M1.400 4L3.500 2.200V10.400" fill="none" stroke="#fff" stroke-width="2"/></svg>
<div class="a" style="left:174px;top:163px;width:610px;height:458px;background:#fff;box-shadow:0 0 0 1px rgba(90,120,175,.28),5px 5px 3px rgba(25,50,105,.48)"></div>
<svg class="a" style="left:220px;top:304px" width="520" height="100" viewBox="0 0 520 100"><rect x=".5" y=".5" width="519" height="99" fill="none" stroke="#2a3350" stroke-dasharray="1 2" shape-rendering="crispEdges"/></svg>
<svg class="a" style="left:266px;top:421px" width="428" height="120" viewBox="0 0 428 120"><rect x=".5" y=".5" width="427" height="119" fill="none" stroke="#2a3350" stroke-dasharray="1 2" shape-rendering="crispEdges"/></svg>
<div class="a t" style="left:278px;top:336px;width:400px;height:37px"><svg width="400" height="37" role="img" aria-label="クリックしてタイトルを入力"><text x="1.500" y="31.700" font-size="34" fill="#000" textLength="398" lengthAdjust="spacingAndGlyphs">クリックしてタイトルを入力</text></svg></div>
<div class="a t" style="left:306px;top:427px;width:346px;height:29px"><svg width="346" height="29" role="img" aria-label="クリックしてサブタイトルを入力"><text x="2" y="24.100" font-size="25" fill="#8a8a8a" textLength="343" lengthAdjust="spacingAndGlyphs">クリックしてサブタイトルを入力</text></svg></div>
<div class="a" style="left:134px;top:640px;width:689px;height:4px;background:linear-gradient(#a9c6ec,#c9ddf7 50%,#a3c1ea)"></div>
<div class="a" style="left:134px;top:644px;width:675px;height:38px;background:#fff;border-left:1px solid #8fb0dd;border-top:1px solid #8fb0dd"></div>
<div class="a" style="left:808px;top:644px;width:15px;height:38px;background:linear-gradient(90deg,#9dbdea,#7f9fd2 2px,#7b9cd0)"></div>
<svg class="a" style="left:808px;top:644px" width="15" height="38" viewBox="0 0 15 38"><path d="M4 11L8.500 6L13 11ZM4 28L8.500 33L13 28Z" fill="#7c8ba9"/></svg>
<div class="a t" style="left:143px;top:650px;width:146px;height:21px"><svg width="146" height="21" role="img" aria-label="クリックしてノートを入力"><text x="1.500" y="16.500" font-size="16" fill="#000" textLength="143" lengthAdjust="spacingAndGlyphs">クリックしてノートを入力</text></svg></div>
<div class="a" style="left:0px;top:682px;width:825px;height:1px;background:#6a8fc6"></div>
<div class="a" style="left:0px;top:683px;width:825px;height:21px;background:linear-gradient(#eef5fd 0,#d9e7fa 1px,#cddff6 35%,#bad1ef 55%,#b5cdec 75%,#cbddf5 100%)"></div>
<div class="a" style="left:547px;top:683px;width:278px;height:21px;background:linear-gradient(#dbe8fa 0,#c9dcf6 1px,#b3cdf0 30%,#9fc0ea 50%,#94b7e5 75%,#a9c7ee 100%);border-left:1px solid #e7f0fb"></div>
<div class="a" style="left:546px;top:683px;width:1px;height:21px;background:#8eaedb"></div>
<div class="a t" style="left:6px;top:685px;width:61px;height:15px"><svg width="61" height="15" role="img" aria-label="スライド 1/1"><text x="2.200" y="11.400" font-size="11" fill="#15294f" textLength="36" lengthAdjust="spacingAndGlyphs">スライド</text><text x="43.500" y="11.300" font-size="11.500" fill="#15294f" textLength="15.500" lengthAdjust="spacingAndGlyphs">1/1</text></svg></div>
<div class="a t" style="left:81px;top:685px;width:79px;height:15px"><svg width="79" height="15" role="img" aria-label="“Office テーマ”"><text x="2.400" y="12.400" font-size="12" fill="#15294f" textLength="35" lengthAdjust="spacingAndGlyphs">“Office</text><text x="42.500" y="12" font-size="11.500" fill="#15294f" textLength="29.500" lengthAdjust="spacingAndGlyphs">テーマ</text><text x="73" y="12.400" font-size="12" fill="#15294f">”</text></svg></div>
<div class="a t" style="left:175px;top:685px;width:76px;height:15px"><svg width="76" height="15" role="img" aria-label="日本語 (日本)"><text x="2" y="11.100" font-size="11" fill="#15294f" textLength="35" lengthAdjust="spacingAndGlyphs">日本語</text><text x="42.600" y="10.800" font-size="11" fill="#15294f">(</text><text x="48" y="11.100" font-size="11" fill="#15294f" textLength="22.500" lengthAdjust="spacingAndGlyphs">日本</text><text x="70.800" y="10.800" font-size="11" fill="#15294f">)</text></svg></div>
<div class="a" style="left:75px;top:685px;width:2px;height:19px;background:linear-gradient(90deg,#adc5e7 50%,#e6effb 50%)"></div>
<div class="a" style="left:167px;top:685px;width:2px;height:19px;background:linear-gradient(90deg,#adc5e7 50%,#e6effb 50%)"></div>
<div class="a" style="left:257px;top:685px;width:2px;height:19px;background:linear-gradient(90deg,#adc5e7 50%,#e6effb 50%)"></div>
<div class="a" style="left:554px;top:684px;width:56px;height:19px;border:1px solid #8fb0de;border-radius:3px;background:linear-gradient(#dbe8f8,#c3d8f2 50%,#b5cdec)"></div>
<div class="a" style="left:555px;top:685px;width:18px;height:17px;background:linear-gradient(#fde9b4,#fbd27a 45%,#f8b648 55%,#fbd27a);border-radius:2px 0 0 2px"></div>
<div class="a" style="left:572px;top:685px;width:1px;height:17px;background:#9db9e1"></div>
<div class="a" style="left:590px;top:685px;width:1px;height:17px;background:#9db9e1"></div>
<svg class="a" style="left:558.5px;top:688.5px" width="12" height="10" viewBox="0 0 12 10"><rect x=".5" y=".5" width="11" height="9" fill="#fff" stroke="#3b4a2e" stroke-width="1.100"/><path d="M4.500 .5V9.500M4.500 6.500H11.500" stroke="#3b4a2e" stroke-width="1.100"/><rect x="6" y="2" width="4" height="3" fill="#c9c9c9"/></svg>
<svg class="a" style="left:576.5px;top:688.5px" width="11" height="9" viewBox="0 0 11 9"><path d="M.5 .5H4V3.500H.5ZM6.500 .5H10V3.500H6.500ZM.5 5.500H4V8.500H.5ZM6.500 5.500H10V8.500H6.500Z" fill="#fff" stroke="#48603a" stroke-width="1"/></svg>
<svg class="a" style="left:595.5px;top:687.5px" width="11" height="11" viewBox="0 0 11 11"><path d="M.5 .5H10.500V2.500H.5ZM2 2.500H9V6H2Z" fill="#fff" stroke="#48603a" stroke-width="1"/><path d="M5.500 6V9.500M3 10H8" stroke="#48603a" stroke-width="1.100"/></svg>
<div class="a t" style="left:616px;top:686px;width:22px;height:14px"><svg width="22" height="14" role="img" aria-label="64%"><text x="2.300" y="11.300" font-size="12" fill="#15294f" textLength="18" lengthAdjust="spacingAndGlyphs">64%</text></svg></div>
<svg class="a" style="left:644.5px;top:684.5px" width="17" height="17" viewBox="0 0 17 17"><circle cx="8.500" cy="8.500" r="7.800" fill="#e9f0fa" stroke="#6f8fbe"/><circle cx="8.500" cy="8.500" r="6.300" fill="none" stroke="#fff" opacity=".8"/><path d="M4.500 8.500H12.500" stroke="#2f4466" stroke-width="2"/></svg>
<svg class="a" style="left:762.5px;top:684.5px" width="17" height="17" viewBox="0 0 17 17"><circle cx="8.500" cy="8.500" r="7.800" fill="#e9f0fa" stroke="#6f8fbe"/><circle cx="8.500" cy="8.500" r="6.300" fill="none" stroke="#fff" opacity=".8"/><path d="M4.500 8.500H12.500M8.500 4.500V12.500" stroke="#2f4466" stroke-width="2"/></svg>
<div class="a" style="left:662px;top:693px;width:101px;height:1px;background:#5f7da9"></div>
<div class="a" style="left:662px;top:694px;width:101px;height:1px;background:#e6effa"></div>
<div class="a" style="left:713px;top:689px;width:1px;height:9px;background:#5f7da9"></div>
<div class="a" style="left:714px;top:689px;width:1px;height:9px;background:#e6effa"></div>
<svg class="a" style="left:689px;top:686px" width="10" height="14" viewBox="0 0 10 14"><path d="M.5 1.500Q.5 .5 1.500 .5H8.500Q9.500 .5 9.500 1.500V8.500L5 13.300L.5 8.500Z" fill="#e3ecf8" stroke="#5c7195"/><path d="M5 3V9" stroke="#8fa3c3"/></svg>
<svg class="a" style="left:788px;top:685px" width="16" height="16" viewBox="0 0 16 16"><rect x=".5" y=".5" width="15" height="15" rx="2" fill="#eef3fa" stroke="#8aa5cc"/><path d="M8 2V6M6.500 4.500L8 6L9.500 4.500M8 14V10M6.500 11.500L8 10L9.500 11.500M2 8H6M4.500 6.500L6 8L4.500 9.500M14 8H10M11.500 6.500L10 8L11.500 9.500" fill="none" stroke="#3d5c3a" stroke-width=".9"/></svg>
<svg class="a" style="left:812px;top:691px" width="12" height="12" viewBox="0 0 12 12"><path d="M8 1H10V3H8ZM4 5H6V7H4ZM8 5H10V7H8ZM0 9H2V11H0ZM4 9H6V11H4ZM8 9H10V11H8Z" fill="#5f7fb0"/></svg>
<div class="a" style="left:824px;top:0px;width:1px;height:705px;background:#fff"></div>
<div class="a" style="left:0px;top:0px;width:1px;height:705px;background:#fff"></div>
<div class="a" style="left:0px;top:704px;width:825px;height:1px;background:#fff"></div>
</body></html>
